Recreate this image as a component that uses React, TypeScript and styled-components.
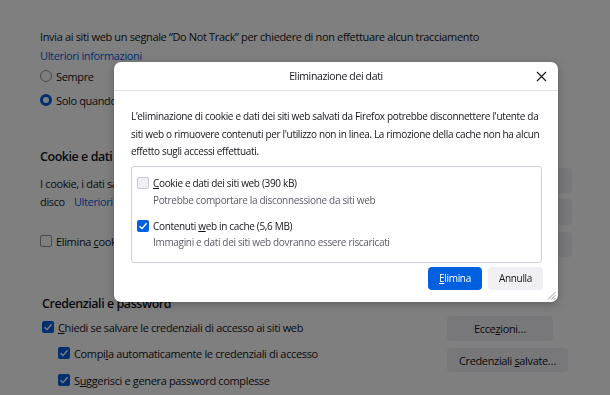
import React from "react";
import styled, { createGlobalStyle } from "styled-components";

const GlobalStyle = createGlobalStyle`
  html, body { margin: 0; padding: 0; background: #ffffff; }
  body {
    font-family: "Open Sans", "Noto Sans", sans-serif;
    color: #15141a;
    width: 610px;
    height: 395px;
    overflow: hidden;
  }
`;

const Page = styled.div`
  width: 610px;
  height: 395px;
  box-sizing: border-box;
  padding: 0 38px 0 40px;
  font-size: 11px;
  letter-spacing: -0.35px;
  position: relative;
  overflow: hidden;
`;

const Line = styled.div<{ $h: number; $mt?: number; $indent?: number }>`
  height: ${(p) => p.$h}px;
  margin-top: ${(p) => p.$mt ?? 0}px;
  display: flex;
  align-items: center;
  gap: 4px;
  padding-left: ${(p) => p.$indent ?? 0}px;
  white-space: nowrap;
`;

const Link = styled.span<{ $ml?: number }>`
  color: #0060df;
  margin-left: ${(p) => p.$ml ?? 0}px;
`;

const Heading = styled.div<{ $h: number; $indent?: number }>`
  height: ${(p) => p.$h}px;
  padding-left: ${(p) => p.$indent ?? 0}px;
  display: flex;
  align-items: center;
  font-size: 12.5px;
  letter-spacing: -0.45px;
  font-weight: 600;
  white-space: nowrap;
`;

const Radio = styled.span<{ $on?: boolean }>`
  width: 12px;
  height: 12px;
  box-sizing: border-box;
  border-radius: 50%;
  flex: none;
  background: #fff;
  border: ${(p) => (p.$on ? "3.5px solid #0060df" : "1px solid #8f8f9d")};
`;

const Box = styled.span<{ $on?: boolean; $soft?: boolean }>`
  width: 12px;
  height: 12px;
  box-sizing: border-box;
  border-radius: 2px;
  flex: none;
  display: inline-flex;
  align-items: center;
  justify-content: center;
  background: ${(p) => (p.$on ? "#0060df" : p.$soft ? "#f0f0f4" : "#fff")};
  border: ${(p) => (p.$on ? "none" : p.$soft ? "1px solid #c9c9d0" : "1px solid #8f8f9d")};
`;

const Check = ({ on, soft }: { on?: boolean; soft?: boolean }) => (
  <Box $on={on} $soft={soft}>
    {on && (
      <svg width="10" height="10" viewBox="0 0 10 10">
        <path d="M1.5 5.2 L4 7.6 L8.6 2.2" fill="none" stroke="#fff" strokeWidth="1.4" />
      </svg>
    )}
  </Box>
);

const Section = styled.div<{ $mt: number; $pr?: number }>`
  display: grid;
  grid-template-columns: minmax(0, 1fr) auto;
  column-gap: 10px;
  margin-top: ${(p) => p.$mt}px;
  padding-right: ${(p) => p.$pr ?? 0}px;
`;

const Col = styled.div`
  display: flex;
  flex-direction: column;
  min-width: 0;
`;

const BtnCol = styled.div<{ $pt: number; $left?: boolean }>`
  display: flex;
  flex-direction: column;
  align-items: ${(p) => (p.$left ? "flex-start" : "flex-end")};
  padding-top: ${(p) => p.$pt}px;
`;

const GhostBtn = styled.div<{ $w: number; $h: number; $mt?: number }>`
  width: ${(p) => p.$w}px;
  height: ${(p) => p.$h}px;
  margin-top: ${(p) => p.$mt ?? 0}px;
  border-radius: 4px;
  background: #f0f0f4;
  display: flex;
  align-items: center;
  justify-content: center;
  white-space: nowrap;
`;

const Spacer = styled.div<{ $h: number }>`
  height: ${(p) => p.$h}px;
`;

const Overlay = styled.div`
  position: fixed;
  inset: 0;
  background: rgba(0, 0, 0, 0.5);
`;

const Dialog = styled.div`
  position: absolute;
  left: 114px;
  top: 62px;
  width: 444px;
  height: 240px;
  background: #fff;
  border-radius: 7px;
  box-shadow: 0 2px 10px rgba(0, 0, 0, 0.25);
  display: flex;
  flex-direction: column;
  font-size: 10px;
  letter-spacing: -0.33px;
  color: #15141a;
`;

const DHeader = styled.div`
  height: 28px;
  border-bottom: 1px solid #e0e0e6;
  display: flex;
  align-items: center;
  justify-content: center;
  position: relative;
  font-size: 10.5px;
  letter-spacing: -0.35px;
  font-weight: 500;
`;

const Close = styled.span`
  position: absolute;
  right: 11px;
  top: 9px;
  width: 11px;
  height: 11px;
  display: flex;
`;

const DBody = styled.div`
  padding: 17px 16px 0 17px;
  display: flex;
  flex-direction: column;
`;

const Para = styled.p`
  margin: 0;
  line-height: 17.6px;
`;

const Options = styled.div`
  margin-top: 5px;
  border: 1px solid #cfcfd8;
  border-radius: 3px;
  height: 97px;
  box-sizing: border-box;
  padding: 6px 6px 0 5px;
  display: flex;
  flex-direction: column;
`;

const OptRow = styled.div<{ $mt?: number }>`
  height: 20px;
  margin-top: ${(p) => p.$mt ?? 0}px;
  display: flex;
  align-items: center;
  gap: 4px;
`;

const OptSub = styled.div<{ $h: number }>`
  height: ${(p) => p.$h}px;
  display: flex;
  align-items: center;
  padding-left: 16px;
  color: #5b5b66;
`;

const Footer = styled.div`
  display: flex;
  justify-content: flex-end;
  gap: 6px;
  padding: 4px 15px 0 0;
`;

const Btn = styled.div<{ $primary?: boolean; $w: number }>`
  width: ${(p) => p.$w}px;
  height: 23px;
  border-radius: 4px;
  display: flex;
  align-items: center;
  justify-content: center;
  background: ${(p) => (p.$primary ? "#0060df" : "#f0f0f4")};
  color: ${(p) => (p.$primary ? "#fff" : "#15141a")};
`;

const Grip = styled.span`
  position: absolute;
  right: 2px;
  bottom: 2px;
  display: flex;
`;

const U = styled.span`
  text-decoration: underline;
  text-underline-offset: 1px;
`;

export default function App() {
  return (
    <>
      <GlobalStyle />
      <Page>
        <Spacer $h={27} />
        <Line $h={18}>Invia ai siti web un segnale “Do Not Track” per chiedere di non effettuare alcun tracciamento</Line>
        <Line $h={20}>
          <Link>Ulteriori informazioni</Link>
        </Line>
        <Line $h={22}>
          <Radio />
          Sempre
        </Line>
        <Line $h={26}>
          <Radio $on />
          Solo quando Firefox è impostato per bloccare gli elementi traccianti conosciuti
        </Line>
        <Section $mt={34}>
          <Col>
            <Heading $h={18}>Cookie e dati dei siti web</Heading>
            <Line $h={18} $mt={9}>
              I cookie, i dati salvati dai siti web e la cache occupano attualmente 6,0 MB di spazio su
            </Line>
            <Line $h={18}>
              <span>disco</span>
              <Link $ml={5}>Ulteriori informazioni</Link>
            </Line>
            <Line $h={18} $mt={22}>
              <Check />
              <span>
                Elimina <U>c</U>ookie e dati dei siti web alla chiusura di Firefox
              </span>
            </Line>
          </Col>
          <BtnCol $pt={21}>
            <GhostBtn $w={120} $h={25}>Elimina dati…</GhostBtn>
            <GhostBtn $w={120} $h={26} $mt={6}>
              Gestisci dati…
            </GhostBtn>
            <GhostBtn $w={120} $h={25} $mt={7}>
              Gestisci eccezioni…
            </GhostBtn>
          </BtnCol>
        </Section>
        <Section $mt={37} $pr={4}>
          <Col>
            <Heading $h={18} $indent={2}>
              Credenziali e password
            </Heading>
            <Line $h={18} $mt={6} $indent={2}>
              <Check on />
              <span>
                <U>C</U>hiedi se salvare le credenziali di accesso ai siti web
              </span>
            </Line>
            <Line $h={18} $mt={8} $indent={18}>
              <Check on />
              <span>
                Compi<U>l</U>a automaticamente le credenziali di accesso
              </span>
            </Line>
            <Line $h={18} $mt={9} $indent={18}>
              <Check on />
              <span>
                S<U>u</U>ggerisci e genera password complesse
              </span>
            </Line>
          </Col>
          <BtnCol $pt={22} $left>
            <GhostBtn $w={106} $h={25}>
              <span>
                Ecce<U>z</U>ioni…
              </span>
            </GhostBtn>
            <GhostBtn $w={121} $h={24} $mt={7}>
              <span>
                Credenziali <U>s</U>alvate…
              </span>
            </GhostBtn>
          </BtnCol>
        </Section>
      </Page>
      <Overlay />
      <Dialog>
        <DHeader>
          Eliminazione dei dati
          <Close>
            <svg width="11" height="11" viewBox="0 0 11 11">
              <path d="M1 1 L10 10 M10 1 L1 10" stroke="#15141a" strokeWidth="1.1" />
            </svg>
          </Close>
        </DHeader>
        <DBody>
          <Para>
            L’eliminazione di cookie e dati dei siti web salvati da Firefox potrebbe disconnettere l'utente da siti web o
            rimuovere contenuti per l'utilizzo non in linea. La rimozione della cache non ha alcun effetto sugli accessi
            effettuati.
          </Para>
          <Options>
            <OptRow>
              <Check soft />
              <span>
                <U>C</U>ookie e dati dei siti web (390 kB)
              </span>
            </OptRow>
            <OptSub $h={14}>Potrebbe comportare la disconnessione da siti web</OptSub>
            <OptRow $mt={9}>
              <Check on />
              <span>
                Contenuti <U>w</U>eb in cache (5,6 MB)
              </span>
            </OptRow>
            <OptSub $h={13}>Immagini e dati dei siti web dovranno essere riscaricati</OptSub>
          </Options>
        </DBody>
        <Footer>
          <Btn $primary $w={54}>
            <span>
              <U>E</U>limina
            </span>
          </Btn>
          <Btn $w={55}>Annulla</Btn>
        </Footer>
        <Grip>
          <svg width="9" height="9" viewBox="0 0 9 9">
            <path d="M8.5 1 L1 8.5 M8.5 4 L4 8.5 M8.5 7 L7 8.5" stroke="#8f8f9d" strokeWidth="0.9" />
          </svg>
        </Grip>
      </Dialog>
    </>
  );
}
